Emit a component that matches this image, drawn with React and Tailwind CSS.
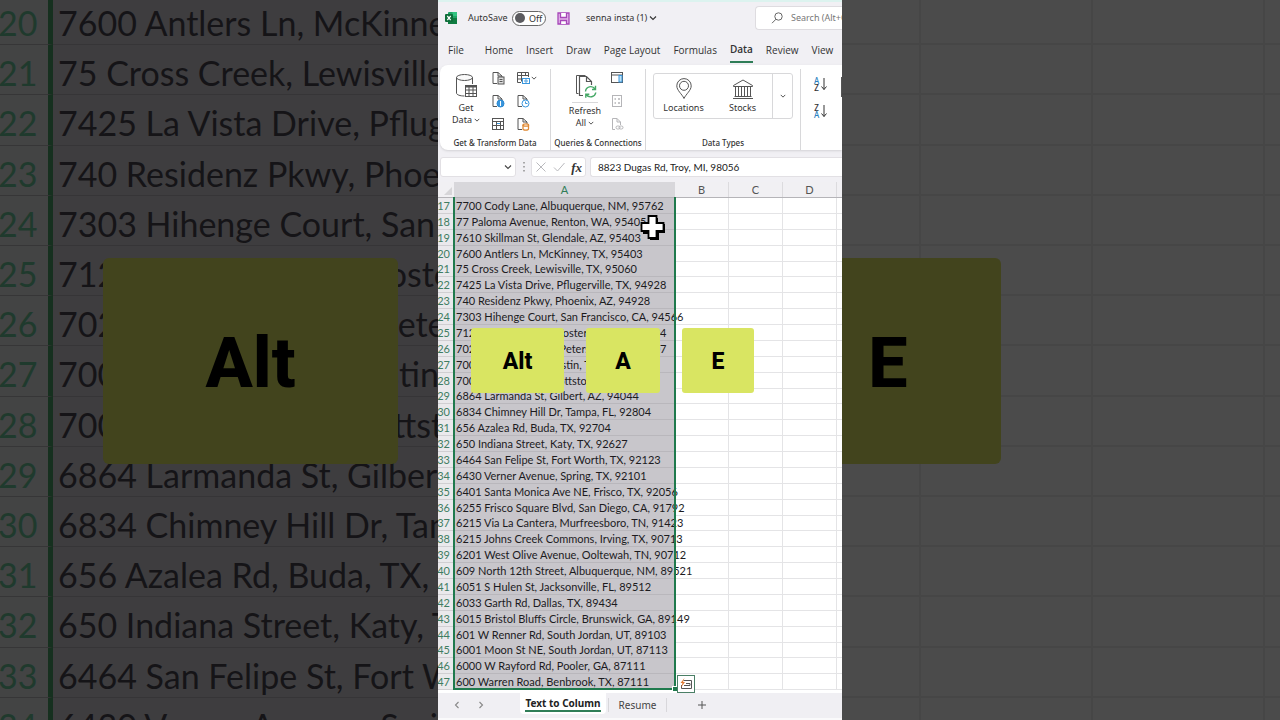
import React from "react";

const ROWS = [
  [17, "7700 Cody Lane, Albuquerque, NM, 95762"],
  [18, "77 Paloma Avenue, Renton, WA, 95405"],
  [19, "7610 Skillman St, Glendale, AZ, 95403"],
  [20, "7600 Antlers Ln, McKinney, TX, 95403"],
  [21, "75 Cross Creek, Lewisville, TX, 95060"],
  [22, "7425 La Vista Drive, Pflugerville, TX, 94928"],
  [23, "740 Residenz Pkwy, Phoenix, AZ, 94928"],
  [24, "7303 Hihenge Court, San Francisco, CA, 94566"],
  [25, "712 Bounty Avenue, Foster City, CA, 94404"],
  [26, "702 Beach Drive NE, Petersburg, FL, 94107"],
  [27, "7001 Burnet Lane, Austin, TX, 94070"],
  [28, "7000 Heritage Ave, Pottstown, PA, 94061"],
  [29, "6864 Larmanda St, Gilbert, AZ, 94044"],
  [30, "6834 Chimney Hill Dr, Tampa, FL, 92804"],
  [31, "656 Azalea Rd, Buda, TX, 92704"],
  [32, "650 Indiana Street, Katy, TX, 92627"],
  [33, "6464 San Felipe St, Fort Worth, TX, 92123"],
  [34, "6430 Verner Avenue, Spring, TX, 92101"],
  [35, "6401 Santa Monica Ave NE, Frisco, TX, 92056"],
  [36, "6255 Frisco Square Blvd, San Diego, CA, 91792"],
  [37, "6215 Via La Cantera, Murfreesboro, TN, 91423"],
  [38, "6215 Johns Creek Commons, Irving, TX, 90713"],
  [39, "6201 West Olive Avenue, Ooltewah, TN, 90712"],
  [40, "609 North 12th Street, Albuquerque, NM, 89521"],
  [41, "6051 S Hulen St, Jacksonville, FL, 89512"],
  [42, "6033 Garth Rd, Dallas, TX, 89434"],
  [43, "6015 Bristol Bluffs Circle, Brunswick, GA, 89149"],
  [44, "601 W Renner Rd, South Jordan, UT, 89103"],
  [45, "6001 Moon St NE, South Jordan, UT, 87113"],
  [46, "6000 W Rayford Rd, Pooler, GA, 87111"],
  [47, "600 Warren Road, Benbrook, TX, 87111"],
];

const BACK_ROWS = ROWS.filter(([n]) => n >= 20 && n <= 34);
const TABS = ["File", "Home", "Insert", "Draw", "Page Layout", "Formulas", "Data", "Review", "View"];

function Chevron({ className = "w-[8px] h-[8px]" }) {
  return (
    <svg viewBox="0 0 8 8" className={className} fill="none" stroke="currentColor" strokeWidth="1.1" aria-hidden="true">
      <path d="M1 2.5 4 5.5 7 2.5" />
    </svg>
  );
}

function Svg({ box = "0 0 14 14", className = "w-[14px] h-[14px]", children }) {
  return (
    <svg viewBox={box} className={className} fill="none" stroke="#555" strokeWidth="1" aria-hidden="true">
      {children}
    </svg>
  );
}

const PAGE = "M6 12.500H2V1.500h5L11 5V7M7 1.500V5h4";

const IconText = () => (
  <Svg>
    <path d={PAGE} />
    <rect x="7" y="6" width="6" height="7" fill="#ddd" />
    <path d="M8.500 8.500h3M8.500 10.500h3" />
  </Svg>
);
const IconWeb = () => (
  <Svg>
    <path d={PAGE} />
    <circle cx="9.500" cy="9.500" r="3.500" fill="#3a96dd" stroke="#2b88d0" />
    <path d="M9.500 7v5" stroke="#fff" />
  </Svg>
);
const IconTable = () => (
  <Svg>
    <rect x="1.500" y="1.500" width="11" height="11" />
    <path d="M1.500 4.500h11M1.500 8.500h11M5.500 4.500v8M9.500 4.500v8" />
    <path d="M6 6.500h3" stroke="#3a96dd" />
  </Svg>
);
const IconPicture = () => (
  <Svg>
    <path d="M5 11.500H1.500v-10h11V6M1.500 4.500h11M1.500 8h5M5.500 1.500v9M9.500 1.500V5" />
    <rect x="6.500" y="7.500" width="7" height="5" fill="#fff" stroke="#3a96dd" />
    <circle cx="10" cy="10" r="1.200" stroke="#3a96dd" />
  </Svg>
);
const IconRecent = () => (
  <Svg>
    <path d={PAGE} />
    <circle cx="9.500" cy="9.500" r="3.500" fill="#fff" stroke="#3a96dd" />
    <path d="M9.500 7.500v2h2" stroke="#3a96dd" />
  </Svg>
);
const IconConnection = () => (
  <Svg>
    <path d={PAGE} />
    <path d="M7 8v4c0 1.500 5.500 1.500 5.500 0V8" fill="#fff" stroke="#e08a35" strokeWidth="1.300" />
    <ellipse cx="9.800" cy="8" rx="2.800" ry="1.200" fill="#fff" stroke="#e08a35" strokeWidth="1.300" />
  </Svg>
);
const IconPane = () => (
  <Svg>
    <rect x="1.500" y="1.500" width="11" height="10" />
    <path d="M1.500 4h11" />
    <rect x="9" y="4.500" width="3" height="6.500" fill="#bfe3f5" stroke="#3a96dd" />
  </Svg>
);
const IconProps = () => (
  <Svg>
    <g stroke="#b5b5b8">
      <rect x="2.500" y="1.500" width="9" height="11" />
      <path d="M4.500 5h1.500M8 5h2M4.500 9h1.500M8 9h2" strokeWidth="1.500" />
    </g>
  </Svg>
);
const IconLinks = () => (
  <Svg>
    <g stroke="#b5b5b8">
      <path d="M5 12.500H2.500v-11H7L10.500 5v3M7 1.500V5h3.500" />
      <rect x="6" y="9" width="4" height="3" rx="1.500" />
      <rect x="9" y="9" width="4" height="3" rx="1.500" />
    </g>
  </Svg>
);

function IconDatabase() {
  return (
    <Svg box="0 0 24 26" className="w-[24px] h-[26px]">
      <ellipse cx="10.500" cy="4.500" rx="8" ry="3" fill="#fafafa" />
      <path d="M2.500 4.500V20c0 1.800 3.500 3 8 3M18.500 4.500V11" />
      <rect x="11.500" y="12.500" width="11" height="11" fill="#fff" />
      <path d="M11.500 13.500h11" strokeWidth="2" />
      <path d="M11.500 17h11M11.500 20.500h11M15 13v10.500M19 13v10.500" />
    </Svg>
  );
}

function IconRefresh() {
  return (
    <Svg box="0 0 24 26" className="w-[24px] h-[26px]">
      <path d="M5.500 20.500h-2v-18h9" />
      <path d="M10 22.500H6.500v-19h7l5 5v3.500M13.500 3.500v5h5" strokeWidth="1.200" />
      <g stroke="#45a866" strokeWidth="1.400">
        <path d="M12.500 18.500a5.200 5.200 0 0 1 9.500-2.500M22.500 12.800V16.500h-3.500M22.800 19.500a5.200 5.200 0 0 1-9.500 2M12.800 24.800v-3.500h3.500" />
      </g>
    </Svg>
  );
}

function IconPin() {
  return (
    <Svg box="0 0 18 22" className="w-[18px] h-[22px]">
      <path d="M9 20.500C7 16 1.800 12.500 1.800 7.800a7.200 7.200 0 0 1 14.400 0C16.200 12.500 11 16 9 20.500Z" />
      <circle cx="9" cy="7.800" r="4.500" />
    </Svg>
  );
}

function IconBank() {
  return (
    <Svg box="0 0 22 22" className="w-[22px] h-[22px]">
      <path d="M1.500 7.500 11 2l9.500 5.500v1h-19ZM2.500 18.500h17M1 20.500h20" />
      <path d="M3.500 9v9M6.500 9v9M9.500 9v9M12.500 9v9M15.500 9v9M18.500 9v9" />
    </Svg>
  );
}

function IconSort({ top, bottom, topClass, bottomClass }) {
  return (
    <span className="flex items-center gap-[2px]">
      <span className="flex flex-col text-[8px] font-medium leading-[7px]">
        <span className={topClass}>{top}</span>
        <span className={bottomClass}>{bottom}</span>
      </span>
      <Svg box="0 0 6 14" className="w-[6px] h-[14px]">
        <path d="M3 1v11.500M.5 9.500 3 12.500 5.500 9.500" stroke="#333" />
      </Svg>
    </span>
  );
}

function SmallTool({ label, children }) {
  return (
    <button type="button" aria-label={label} className="flex h-[14px] items-center">
      {children}
    </button>
  );
}

function Group({ title, className, children }) {
  return (
    <section aria-label={title} className={`flex shrink-0 flex-col justify-between ${className}`}>
      <div className="flex">{children}</div>
      <h2 className="pb-px text-center text-[8px] leading-[12px] font-medium whitespace-nowrap text-[#333]">{title}</h2>
    </section>
  );
}

function TitleBar() {
  return (
    <header className="flex h-[34px] items-center border-t-2 border-[#dcf3ef] pl-[7px] text-[9px] text-[#333]">
      <svg viewBox="0 0 12 12" className="w-[12px] h-[12px]" aria-hidden="true">
        <rect x="3" width="9" height="12" rx="1" fill="#21a366" />
        <rect x="3" y="6" width="9" height="6" fill="#107c41" />
        <rect x="7.500" width="4.500" height="4" fill="#33c481" />
        <rect y="2" width="8" height="8" rx="1" fill="#0e6e3a" />
        <path d="M2.300 4 5.700 8.200M5.700 4 2.300 8.200" stroke="#fff" strokeWidth="1.200" />
      </svg>
      <span id="autosave" className="ml-[11px] w-[40px] whitespace-nowrap">AutoSave</span>
      <button
        type="button"
        role="switch"
        aria-checked="false"
        aria-labelledby="autosave"
        className="ml-[4px] flex h-[15px] w-[34px] items-center gap-[4px] rounded-full border border-[#666] bg-white px-[2px] leading-none"
      >
        <span className="size-[10px] rounded-full bg-[#5b5b5f]" />
        Off
      </button>
      <button type="button" aria-label="Save" className="ml-[11px]">
        <svg viewBox="0 0 13 13" className="w-[13px] h-[13px]" fill="#e3b5ea" stroke="#a646b8" strokeWidth="1.300" aria-hidden="true">
          <path d="M1 1h11v11H1Z" />
          <path d="M3.500 1v4.500h6V1M3.500 12V8.500h6V12" fill="#fff" />
        </svg>
      </button>
      <button type="button" className="ml-[16px] flex items-center gap-[2px] whitespace-nowrap">
        senna insta (1)
        <Chevron />
      </button>
      <label className="ml-auto flex h-[24px] w-[87px] shrink-0 items-center gap-[8px] overflow-hidden rounded-l border border-r-0 border-[#dedce0] bg-white pl-[15px]">
        <svg viewBox="0 0 12 12" className="w-[12px] h-[12px] shrink-0" fill="none" stroke="#666" aria-hidden="true">
          <circle cx="7.500" cy="4.500" r="3.700" />
          <path d="M5 7.200 1 11.200" />
        </svg>
        <input type="search" aria-label="Search" placeholder="Search (Alt+Q)" className="w-[80px] shrink-0 bg-transparent text-[9px] outline-none placeholder:text-[#777]" />
      </label>
    </header>
  );
}

function RibbonTabs() {
  return (
    <nav className="flex h-[31px] items-center gap-[13px] pl-[10px] font-['Open_Sans',sans-serif] text-[10px] text-[#333]">
      {TABS.map((tab) => (
        <a
          key={tab}
          href="#ribbon"
          className={
            tab === "Data"
              ? "-mb-[3px] shrink-0 border-b-2 border-[#2f7d57] pb-[3px] leading-[18px] font-semibold whitespace-nowrap"
              : "shrink-0 leading-[18px] whitespace-nowrap first:mr-[8px]"
          }
        >
          {tab}
        </a>
      ))}
    </nav>
  );
}

function Ribbon() {
  return (
    <div id="ribbon" className="ml-[2px] flex h-[85px] overflow-hidden rounded-l-lg bg-white pt-[4px] text-[9px] leading-[12px] text-[#333] shadow-sm">
      <Group title="Get &amp; Transform Data" className="w-[111px] border-r border-[#d8d8da]">
        <button type="button" className="ml-[8px] flex w-[36px] flex-col items-center pt-[4px]">
          <IconDatabase />
          <span className="mt-[3px]">Get</span>
          <span className="flex items-center gap-[2px]">Data <Chevron className="w-[6px] h-[6px]" /></span>
        </button>
        <div className="ml-[7px] flex flex-col gap-[9px] pt-[2px]">
          <SmallTool label="From Text/CSV"><IconText /></SmallTool>
          <SmallTool label="From Web"><IconWeb /></SmallTool>
          <SmallTool label="From Table"><IconTable /></SmallTool>
        </div>
        <div className="ml-[11px] flex flex-col gap-[9px] pt-[2px]">
          <SmallTool label="From Picture"><IconPicture /><Chevron className="ml-[1px] w-[6px] h-[6px]" /></SmallTool>
          <SmallTool label="Recent Sources"><IconRecent /></SmallTool>
          <SmallTool label="Existing Connections"><IconConnection /></SmallTool>
        </div>
      </Group>
      <Group title="Queries &amp; Connections" className="w-[95px] border-r border-[#d8d8da]">
        <button type="button" className="ml-[14px] flex w-[40px] flex-col items-center pt-[4px]">
          <IconRefresh />
          <span className="mt-[3px] mb-[2px] w-[26px] border-t border-[#d8d8da]" />
          <span>Refresh</span>
          <span className="flex items-center gap-[2px]">All <Chevron className="w-[6px] h-[6px]" /></span>
        </button>
        <div className="ml-[5px] flex flex-col gap-[9px] pt-[2px]">
          <SmallTool label="Queries pane"><IconPane /></SmallTool>
          <SmallTool label="Properties"><IconProps /></SmallTool>
          <SmallTool label="Edit Links"><IconLinks /></SmallTool>
        </div>
      </Group>
      <Group title="Data Types" className="w-[155px] border-r border-[#d8d8da]">
        <div className="mt-[4px] ml-[7px] flex h-[46px] rounded-[3px] border border-[#d8d8da]">
          <button type="button" className="flex w-[59px] flex-col items-center justify-end gap-[2px] pb-[4px]">
            <IconPin />
            Locations
          </button>
          <button type="button" className="flex w-[59px] flex-col items-center justify-end gap-[2px] pb-[4px]">
            <IconBank />
            Stocks
          </button>
          <button type="button" aria-label="More data types" className="flex w-[20px] items-center justify-center border-l border-[#d8d8da]">
            <Chevron className="w-[6px] h-[6px]" />
          </button>
        </div>
      </Group>
      <div className="flex grow gap-[14px] pt-[8px] pl-[13px]">
        <div className="flex flex-col gap-[13px]">
          <button type="button" aria-label="Sort A to Z">
            <IconSort top="A" bottom="Z" topClass="text-[#2b7fc0]" bottomClass="text-[#333]" />
          </button>
          <button type="button" aria-label="Sort Z to A">
            <IconSort top="Z" bottom="A" topClass="text-[#333]" bottomClass="text-[#2b7fc0]" />
          </button>
        </div>
        <button type="button" aria-label="Sort" className="h-[20px] w-[20px] shrink-0 border border-[#555]" />
      </div>
    </div>
  );
}

function FormulaBar() {
  return (
    <div className="mt-[7px] flex h-[20px] items-stretch pl-[2px]">
      <button type="button" aria-label="Name Box" className="flex w-[76px] items-center justify-end rounded-[3px] border border-[#e2e0e4] bg-white pr-[3px] text-[#444]">
        <Chevron />
      </button>
      <span className="flex w-[15px] items-center justify-center text-[#888]">
        <svg viewBox="0 0 2 10" className="w-[2px] h-[10px]" fill="currentColor" aria-hidden="true">
          <path d="M.3 0h1.400v1.400H.3ZM.3 4h1.400v1.400H.3ZM.3 8h1.400v1.400H.3Z" />
        </svg>
      </span>
      <div className="flex w-[55px] items-center justify-between rounded-[3px] border border-[#e2e0e4] bg-white px-[3px]">
        <button type="button" aria-label="Cancel">
          <Svg box="0 0 12 12" className="w-[12px] h-[12px]"><path d="M1.500 1.500 10.500 10.500M10.500 1.500 1.500 10.500" stroke="#b9b9bd" /></Svg>
        </button>
        <button type="button" aria-label="Enter">
          <Svg box="0 0 12 12" className="w-[12px] h-[12px]"><path d="M1 6.500 4.500 10 11.500 2" stroke="#b9b9bd" /></Svg>
        </button>
        <button type="button" aria-label="Insert Function" className="font-['Liberation_Serif',serif] text-[13px] leading-none font-bold text-[#333] italic">
          fx
        </button>
      </div>
      <input
        aria-label="Formula"
        defaultValue="8823 Dugas Rd, Troy, MI, 98056"
        className="ml-[4px] min-w-0 flex-1 rounded-l-[3px] border border-r-0 border-[#e2e0e4] bg-white pl-[7px] font-['Lato',sans-serif] text-[10px] text-[#222] outline-none"
      />
    </div>
  );
}

const SHEET_COLS = "grid grid-cols-[16px_221px_54px_54px_54px_1fr]";

function Sheet() {
  return (
    <div className="relative mt-[5px] flex min-h-0 flex-1 flex-col bg-white pb-[3px] font-['Lato',sans-serif] text-[11px]">
      <table className="flex min-h-0 flex-1 flex-col text-[#1c1b1e]">
        <thead className="block">
          <tr className={`${SHEET_COLS} h-[16px] border-b border-[#b5b4b8] bg-[#f1f0f3] text-[11px] leading-[15px] text-[#555]`}>
            <td className="flex items-end justify-end p-[2px]">
              <svg viewBox="0 0 8 8" className="w-[8px] h-[8px]" fill="#d6d5d8" aria-hidden="true">
                <path d="M8 0v8H0Z" />
              </svg>
            </td>
            <th scope="col" className="bg-[#d8d7db] font-normal text-[#2f7d57]">A</th>
            <th scope="col" className="border-r border-[#dcdbde] font-normal">B</th>
            <th scope="col" className="border-r border-[#dcdbde] font-normal">C</th>
            <th scope="col" className="border-r border-[#dcdbde] font-normal">D</th>
            <th scope="col" />
          </tr>
        </thead>
        <tbody className="grid min-h-0 flex-1 auto-rows-fr">
          {ROWS.map(([n, address]) => (
            <tr key={n} className={`${SHEET_COLS} min-h-0 leading-[15px]`}>
              <th scope="row" className="border-b border-[#d0cfd2] bg-[#eae9ec] pr-[4px] font-normal text-[#3f7d62]">
                <span className="flex justify-end">{n}</span>
              </th>
              <td className="z-10 border-b border-[#b9b7bc] bg-[#c8c6cb] pl-[2px] whitespace-nowrap">{address}</td>
              <td className="border-r border-b border-[#e4e4e6]" />
              <td className="border-r border-b border-[#e4e4e6]" />
              <td className="border-r border-b border-[#e4e4e6]" />
              <td className="border-b border-[#e4e4e6]" />
            </tr>
          ))}
        </tbody>
      </table>
      <div className="pointer-events-none absolute top-[15px] bottom-[3px] left-[15px] z-20 w-[223px] border-2 border-t-0 border-[#1f7a4d]">
        <span className="absolute -right-[3px] -bottom-[3px] size-[5px] border-t border-l border-white bg-[#1f7a4d]" />
      </div>
      <button type="button" aria-label="Quick Analysis" className="absolute bottom-0 left-[239px] z-20 flex size-[18px] items-center justify-center border border-[#4b7f66] bg-white">
        <Svg>
          <path d="M4.500 3.500h8v8h-10V8M5 8.500h6v-2H7" stroke="#555" />
          <path d="M5.500 1 1.500 6h2L2 10.500 6 5H4Z" fill="#e07b35" stroke="none" />
        </Svg>
      </button>
      <svg viewBox="0 0 28 28" className="absolute top-[31px] left-[200px] z-30 h-[28px] w-[28px]" aria-hidden="true">
        <path d="M12 5h8v6h7v9h-6v7h-9v-6H5v-8h7Z" fill="#000" />
        <path d="M10.500 3h8v7h7v8h-7v7h-8v-7h-7v-8h7Z" fill="#fff" stroke="#000" strokeWidth="1.800" />
      </svg>
    </div>
  );
}

function SheetTabs() {
  return (
    <nav className="flex h-[27px] items-start border-b-2 border-[#fafafb] bg-[#f0eff3] text-[10px] text-[#444]">
      <button type="button" aria-label="Previous sheet" className="mt-[8px] ml-[15px] rotate-90 text-[#888]"><Chevron /></button>
      <button type="button" aria-label="Next sheet" className="mt-[8px] ml-[16px] -rotate-90 text-[#888]"><Chevron /></button>
      <a href="#text-to-column" className="ml-[35px] flex h-[21px] w-[86px] justify-center rounded-b bg-white font-bold text-[#222]">
        <span className="h-[19px] border-b-2 border-[#2f7d57] leading-[20px] whitespace-nowrap">Text to Column</span>
      </a>
      <a href="#resume" className="mt-[5px] ml-[2px] w-[59px] border-x border-[#d8d7db] text-center leading-[14px]">Resume</a>
      <button type="button" aria-label="New sheet" className="mt-[7px] ml-[30px] text-[#555]">
        <svg viewBox="0 0 10 10" className="w-[10px] h-[10px]" fill="none" stroke="currentColor" aria-hidden="true">
          <path d="M5 1v8M1 5h8" />
        </svg>
      </button>
    </nav>
  );
}

function Key({ className, children }) {
  return (
    <kbd className={`flex items-center justify-center rounded-[3px] bg-[#d9e562] pt-[3px] font-['Roboto',sans-serif] text-[23px] font-extrabold text-black ${className}`}>
      {children}
    </kbd>
  );
}

function BackKey({ className, children }) {
  return (
    <kbd className={`absolute top-[258px] flex h-[206px] items-center justify-center rounded-[6px] bg-[#42441d] pt-[4px] font-['Roboto',sans-serif] text-[70px] font-extrabold text-black ${className}`}>
      {children}
    </kbd>
  );
}

function BackdropLeft() {
  return (
    <div aria-hidden="true" className="relative min-w-0 flex-1 overflow-hidden bg-[#3e3d3f]">
      <div className="-mt-[5px] grid h-[753px] auto-rows-fr font-['Lato',sans-serif] text-[34px]">
        {BACK_ROWS.map(([n, address]) => (
          <div key={n} className="grid grid-cols-[53px_1fr] leading-[42px]">
            <span className="border-r-[5px] border-b border-r-[#16301f] border-b-[#363637] bg-[#434444] pt-[7px] text-[#1f3a2d]">
              <span className="-ml-[2px]">{n}</span>
            </span>
            <span className="min-w-0 overflow-hidden border-b border-[#363537] pt-[7px] pl-[5px] whitespace-nowrap text-[#151417]">{address}</span>
          </div>
        ))}
      </div>
      <BackKey className="left-[103px] w-[295px]">Alt</BackKey>
    </div>
  );
}

function BackdropRight() {
  return (
    <div aria-hidden="true" className="relative min-w-0 flex-1 overflow-hidden bg-[#4b4b4b]">
      <div className="-mt-[5px] grid h-[753px] auto-rows-fr">
        {BACK_ROWS.map(([n]) => (
          <div key={n} className="grid grid-cols-[79px_172px_172px_1fr] border-b-2 border-[#464646]">
            <span className="border-r-2 border-[#464646]" />
            <span className="border-r-2 border-[#464646]" />
            <span className="border-r-2 border-[#464646]" />
            <span />
          </div>
        ))}
      </div>
      <BackKey className="-left-[67px] w-[226px]">E</BackKey>
    </div>
  );
}

export default function App() {
  return (
    <div className="flex h-screen overflow-hidden bg-black font-['Noto_Sans',sans-serif]">
      <BackdropLeft />
      <main className="relative flex aspect-[101/180] h-full shrink-0 flex-col overflow-hidden bg-[#f1f0f4]">
        <TitleBar />
        <RibbonTabs />
        <Ribbon />
        <FormulaBar />
        <Sheet />
        <SheetTabs />
        <div className="absolute top-[328px] left-[33px] z-40 flex h-[65px] gap-[22px]">
          <Key className="w-[93px]">Alt</Key>
          <Key className="w-[74px]">A</Key>
          <Key className="w-[72px]">E</Key>
        </div>
      </main>
      <BackdropRight />
    </div>
  );
}
